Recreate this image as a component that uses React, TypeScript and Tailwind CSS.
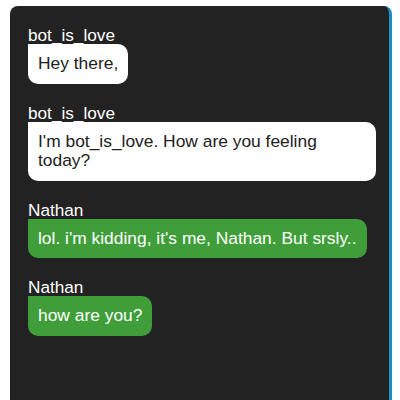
const messages = [
  { from: "bot_is_love", text: "Hey there,", mine: false },
  { from: "bot_is_love", text: "I'm bot_is_love. How are you feeling today?", mine: false },
  { from: "Nathan", text: "lol. i'm kidding, it's me, Nathan. But srsly..", mine: true },
  { from: "Nathan", text: "how are you?", mine: true },
];

const App = () => {
  return (
    <div className="h-[400px] w-[400px] overflow-hidden bg-white pt-[6px] pl-[10px] font-['Liberation_Sans',Arial,sans-serif]">
      <div className="h-[400px] w-[382px] rounded-t-[8px] border-r-[3px] border-[#1b8ec0] bg-[#222222] pt-[20px] pl-[18px]">
        <div className="flex flex-col gap-[20px]">
          {messages.map((m, i) => (
            <div key={i} className="flex flex-col items-start">
              <div className="text-[17.2px] leading-[18px] text-white">{m.from}</div>
              <div
                className={
                  m.mine
                    ? "max-w-[348px] rounded-[10px] rounded-tl-none bg-[#3f9e3a] px-[10px] py-[10px] text-[17.4px] leading-[19.5px] text-white"
                    : "max-w-[348px] rounded-[10px] rounded-tl-none bg-white px-[10px] py-[10px] text-[17.4px] leading-[19.5px] text-[#222222]"
                }
              >
                {m.text}
              </div>
            </div>
          ))}
        </div>
      </div>
    </div>
  );
};

export default App;
